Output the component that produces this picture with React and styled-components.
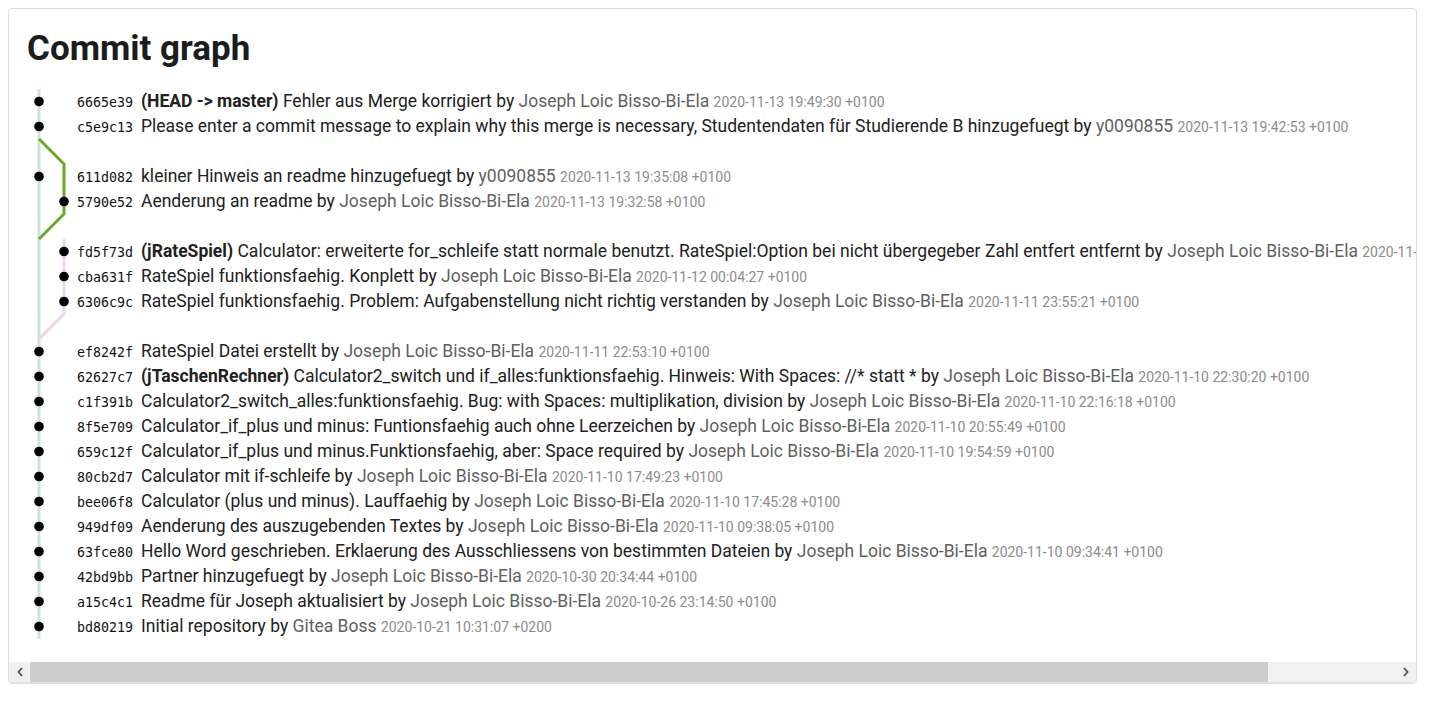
import styled, { createGlobalStyle } from "styled-components";

const GlobalStyle = createGlobalStyle`
  body {
    margin: 8px;
    background: #fff;
    font-family: Roboto, "Liberation Sans", sans-serif;
    color: #212121;
  }
`;

const Card = styled.div`
  box-sizing: border-box;
  width: 1409px;
  border: 1px solid #dcdcdc;
  border-radius: 4px;
  overflow: hidden;
`;

const Scroller = styled.div`
  padding: 19px 18px 23px;
  overflow: hidden;
`;

const Title = styled.h1`
  margin: 0 0 19px;
  font-size: 35px;
  line-height: 42px;
  font-weight: 700;
  color: #1b1c1d;
`;

const Graph = styled.div`
  display: flex;
  align-items: flex-start;
`;

const Lanes = styled.svg`
  flex: 0 0 50px;
  display: block;
`;

const List = styled.ul`
  list-style: none;
  margin: 0;
  padding: 0;
`;

const Row = styled.li`
  height: 25px;
  line-height: 25px;
  white-space: nowrap;
  font-size: 17.5px;
`;

const Hash = styled.span`
  display: inline-block;
  width: 56px;
  margin-right: 8px;
  font-family: "DejaVu Sans Mono", "Liberation Mono", monospace;
  font-size: 13.3px;
  color: #111;
`;

const Refs = styled.b`
  font-weight: 700;
`;

const Author = styled.span`
  color: #5f5f5f;
`;

const When = styled.span`
  font-size: 14px;
  color: #8c8c8c;
`;

const ScrollBar = styled.div`
  display: flex;
  height: 20px;
  background: #f1f1f1;
  border-bottom: 1px solid #e2e2e2;
`;

const ScrollArrow = styled.div`
  flex: 0 0 ${(p) => p.$w}px;
  display: flex;
  align-items: center;
  justify-content: center;
`;

const Thumb = styled.div`
  flex: 0 0 1238px;
  background: #cdcdcd;
`;

const Track = styled.div`
  flex: 1;
`;

const JOSEPH = "Joseph Loic Bisso-Bi-Ela";

const commits = [
  { hash: "6665e39", lane: 0, refs: "(HEAD -> master)", msg: "Fehler aus Merge korrigiert", author: JOSEPH, date: "2020-11-13 19:49:30 +0100" },
  { hash: "c5e9c13", lane: 0, msg: "Please enter a commit message to explain why this merge is necessary, Studentendaten für Studierende B hinzugefuegt", author: "y0090855", date: "2020-11-13 19:42:53 +0100" },
  null,
  { hash: "611d082", lane: 0, msg: "kleiner Hinweis an readme hinzugefuegt", author: "y0090855", date: "2020-11-13 19:35:08 +0100" },
  { hash: "5790e52", lane: 1, msg: "Aenderung an readme", author: JOSEPH, date: "2020-11-13 19:32:58 +0100" },
  null,
  { hash: "fd5f73d", lane: 1, refs: "(jRateSpiel)", msg: "Calculator: erweiterte for_schleife statt normale benutzt. RateSpiel:Option bei nicht übergegeber Zahl entfert entfernt", author: JOSEPH, date: "2020-11-12 00:20:11 +0100" },
  { hash: "cba631f", lane: 1, msg: "RateSpiel funktionsfaehig. Konplett", author: JOSEPH, date: "2020-11-12 00:04:27 +0100" },
  { hash: "6306c9c", lane: 1, msg: "RateSpiel funktionsfaehig. Problem: Aufgabenstellung nicht richtig verstanden", author: JOSEPH, date: "2020-11-11 23:55:21 +0100" },
  null,
  { hash: "ef8242f", lane: 0, msg: "RateSpiel Datei erstellt", author: JOSEPH, date: "2020-11-11 22:53:10 +0100" },
  { hash: "62627c7", lane: 0, refs: "(jTaschenRechner)", msg: "Calculator2_switch und if_alles:funktionsfaehig. Hinweis: With Spaces: //* statt *", author: JOSEPH, date: "2020-11-10 22:30:20 +0100" },
  { hash: "c1f391b", lane: 0, msg: "Calculator2_switch_alles:funktionsfaehig. Bug: with Spaces: multiplikation, division", author: JOSEPH, date: "2020-11-10 22:16:18 +0100" },
  { hash: "8f5e709", lane: 0, msg: "Calculator_if_plus und minus: Funtionsfaehig auch ohne Leerzeichen", author: JOSEPH, date: "2020-11-10 20:55:49 +0100" },
  { hash: "659c12f", lane: 0, msg: "Calculator_if_plus und minus.Funktionsfaehig, aber: Space required", author: JOSEPH, date: "2020-11-10 19:54:59 +0100" },
  { hash: "80cb2d7", lane: 0, msg: "Calculator mit if-schleife", author: JOSEPH, date: "2020-11-10 17:49:23 +0100" },
  { hash: "bee06f8", lane: 0, msg: "Calculator (plus und minus). Lauffaehig", author: JOSEPH, date: "2020-11-10 17:45:28 +0100" },
  { hash: "949df09", lane: 0, msg: "Aenderung des auszugebenden Textes", author: JOSEPH, date: "2020-11-10 09:38:05 +0100" },
  { hash: "63fce80", lane: 0, msg: "Hello Word geschrieben. Erklaerung des Ausschliessens von bestimmten Dateien", author: JOSEPH, date: "2020-11-10 09:34:41 +0100" },
  { hash: "42bd9bb", lane: 0, msg: "Partner hinzugefuegt", author: JOSEPH, date: "2020-10-30 20:34:44 +0100" },
  { hash: "a15c4c1", lane: 0, msg: "Readme für Joseph aktualisiert", author: JOSEPH, date: "2020-10-26 23:14:50 +0100" },
  { hash: "bd80219", lane: 0, msg: "Initial repository", author: "Gitea Boss", date: "2020-10-21 10:31:07 +0200" },
];

const ROW = 25;
const laneX = [12, 37];

// lane drawing, rows are 25px high
const GraphLines = () => (
  <Lanes width="50" height={commits.length * ROW}>
    <line x1={12} y1={0} x2={12} y2={commits.length * ROW} stroke="#cde3db" strokeWidth="3" />
    <polyline points="12,50 37,75 37,125 12,150" fill="none" stroke="#6aa82c" strokeWidth="3" />
    <polyline points="37,150 37,225 12,250" fill="none" stroke="#ecd6ee" strokeWidth="3" />
    {commits.map((c, i) =>
      c ? <circle key={c.hash} cx={laneX[c.lane]} cy={i * ROW + 12.5} r="4.8" fill="#000" /> : null
    )}
  </Lanes>
);

const Chevron = ({ dir }) => (
  <svg width="6" height="10" viewBox="0 0 6 10">
    <polyline
      points={dir === "left" ? "5,1 1.5,5 5,9" : "1,1 4.5,5 1,9"}
      fill="none"
      stroke="#505050"
      strokeWidth="1.8"
    />
  </svg>
);

const App = () => {
  return (
    <>
      <GlobalStyle />
      <Card>
        <Scroller>
          <Title>Commit graph</Title>
          <Graph>
            <GraphLines />
            <List>
              {commits.map((c, i) =>
                c ? (
                  <Row key={c.hash}>
                    <Hash>{c.hash}</Hash>
                    {c.refs && <Refs>{c.refs} </Refs>}
                    {c.msg} by <Author>{c.author}</Author> <When>{c.date}</When>
                  </Row>
                ) : (
                  <Row key={"gap" + i} />
                )
              )}
            </List>
          </Graph>
        </Scroller>
        <ScrollBar>
          <ScrollArrow $w={21}>
            <Chevron dir="left" />
          </ScrollArrow>
          <Thumb />
          <Track />
          <ScrollArrow $w={21}>
            <Chevron dir="right" />
          </ScrollArrow>
        </ScrollBar>
      </Card>
    </>
  );
};

export default App;
